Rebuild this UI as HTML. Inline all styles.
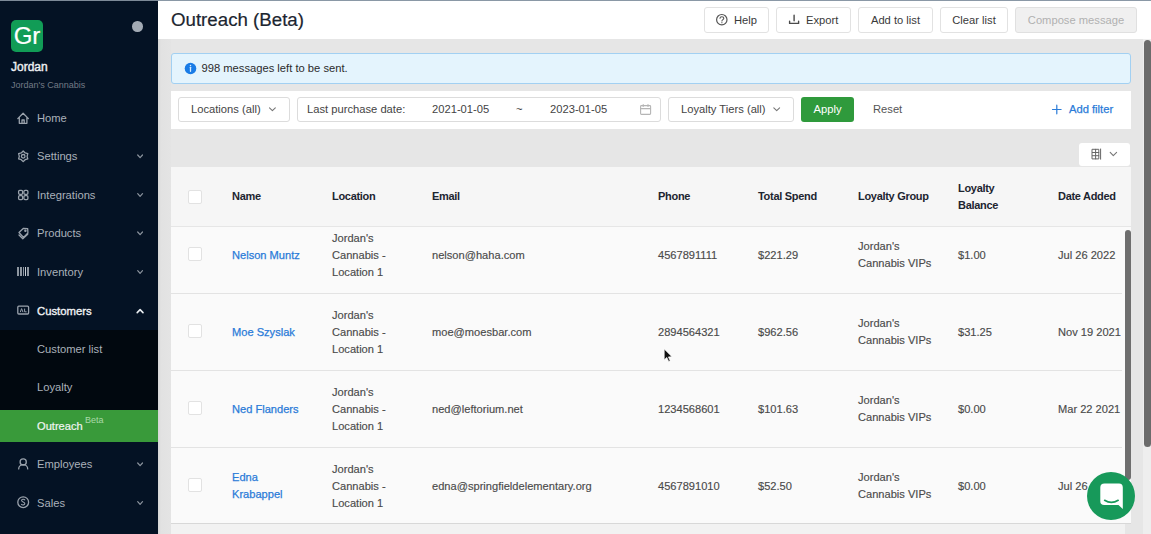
<!DOCTYPE html>
<html><head><meta charset="utf-8">
<style>
*{box-sizing:border-box;margin:0;padding:0}
html,body{width:1151px;height:534px;overflow:hidden;background:#e6e6e6;font-family:"Liberation Sans",sans-serif;color:#333;position:relative}
.abs{position:absolute}
#side{position:absolute;left:0;top:0;width:158px;height:534px;background:#041224}
#logo{left:11px;top:20px;width:32px;height:32px;background:#119c56;border-radius:5px;color:#fff;font-size:24px;line-height:32px;-webkit-text-stroke:0.2px #fff;text-align:center}
.dot{left:132px;top:21px;width:10.5px;height:10.5px;border-radius:50%;background:#a3abb5}
.uname{left:11px;top:59.5px;color:#eef0f3;font-size:12px;-webkit-text-stroke:0.4px #eef0f3}
.ustore{left:11px;top:80px;color:#727a86;font-size:9px}
.mi{position:absolute;left:0;width:158px;height:38px;color:#aab1ba;font-size:11.2px}
.mi .t{position:absolute;left:37px;top:-0.3px;line-height:38px;white-space:nowrap}
.mi svg.ic{position:absolute;left:17px;top:13px}
.mi svg.chev{position:absolute;left:136px;top:16px}
#header{left:158px;top:0;width:993px;height:39px;background:#fff;border-top:1px solid #8a98a6}
.title{left:171px;top:9px;font-size:18.7px;color:#1c2530;-webkit-text-stroke:0.2px #1c2530}
.btn{position:absolute;top:7px;height:26px;border:1px solid #e2e2e2;border-radius:3px;background:#fff;font-size:11.2px;color:#3a3a3a;line-height:24px;text-align:center;white-space:nowrap}
.btn svg{position:absolute}
#alert{left:171px;top:53px;width:960px;height:31px;background:#e4f4fd;border:1px solid #a2d0f2;border-radius:3px}
#alert .tx{position:absolute;left:29.5px;top:0;line-height:29px;font-size:11.2px;color:#2b2b2b}
#filter{left:171px;top:91px;width:960px;height:38px;background:#fff}
.sel{position:absolute;top:6px;height:25px;border:1px solid #dcdcdc;border-radius:3px;background:#fff;font-size:11.2px;color:#444;line-height:23px;white-space:nowrap}
.sel span{position:absolute;top:0}
#table{left:171px;top:167px;width:960px;height:357px;background:#fafafa;overflow:hidden}
#thead{position:absolute;left:0;top:0;width:960px;height:60px;background:#f6f6f6;border-bottom:1px solid #e6e6e6}
.th{position:absolute;font-size:11px;font-weight:bold;letter-spacing:-0.3px;color:#1d2530;white-space:nowrap;line-height:17px}
.td{position:absolute;font-size:11.1px;color:#4a4a4a;-webkit-text-stroke:0.15px #4a4a4a;white-space:nowrap;line-height:17px}
.nm{color:#2a7bd8;-webkit-text-stroke:0.25px #2a7bd8}
.cb{position:absolute;left:17px;width:14px;height:14px;border:1px solid #e2e2e2;border-radius:2px;background:#fff}
.sep{position:absolute;left:0;width:951px;height:1px;background:#e3e3e3}
</style></head><body>
<div id="side">
  <div class="abs" style="left:0;top:0;width:158px;height:1px;background:#7d8a98"></div>
  <div class="abs" id="logo">Gr</div>
  <div class="abs dot"></div>
  <div class="abs uname">Jordan</div>
  <div class="abs ustore">Jordan's Cannabis</div>
  <svg class="abs" style="left:0;top:0" width="158" height="534" viewBox="0 0 158 534" fill="none" stroke="#9aa2ac" stroke-width="1.3" stroke-linecap="round" stroke-linejoin="round">
    <!-- home -->
    <path d="M17.8 118.6 L23.1 113.2 L28.4 118.6 M19.3 117.3 V123.3 H26.9 V117.3 M22 123.3 V120 H24.2 V123.3"/>
    <!-- gear -->
    <path d="M23.20 151.00 L25.15 152.92 L27.79 153.65 L27.10 156.30 L27.79 158.95 L25.15 159.68 L23.20 161.60 L21.25 159.68 L18.61 158.95 L19.30 156.30 L18.61 153.65 L21.25 152.92 Z"/>
    <circle cx="23.2" cy="156.3" r="1.8"/>
    <!-- integrations -->
    <rect x="18.6" y="190.3" width="4" height="4" rx="1.1"/><rect x="23.9" y="190.3" width="4" height="4" rx="1.1"/>
    <rect x="18.6" y="195.6" width="4" height="4" rx="1.1"/><rect x="23.9" y="195.6" width="4" height="4" rx="1.1"/>
    <!-- tag -->
    <path d="M19 232.5 L23.5 228.3 L27.7 228.6 L27.9 233 L23.5 237.4 Z M19 235 L22.8 238.8 L27.7 234.3"/>
    <circle cx="25.4" cy="230.8" r="0.6" fill="#aab2bc"/>
    <!-- customers id card -->
    <rect x="17.8" y="306.2" width="10.8" height="7.8" rx="1"/>
    <path d="M20.4 311.8 L21.6 308.6 L22.8 311.8 M24.6 309 V311.8 H26.2" stroke-width="1"/>
    <!-- employees -->
    <circle cx="23.2" cy="461.9" r="3.1"/>
    <path d="M18.7 468.9 A4.5 4.3 0 0 1 27.7 468.9"/>
    <!-- sales -->
    <circle cx="23.2" cy="502.2" r="5.4"/>
    <path d="M24.8 499.8 C24 499 21.6 499 21.6 500.6 C21.6 502.2 24.8 501.8 24.8 503.6 C24.8 505.2 22.4 505.2 21.5 504.4" stroke-width="1.1"/>
    <!-- chevrons -->
    <path stroke="#8c949e" stroke-width="1.2" d="M137.7 155.0 L140.1 157.7 L142.5 155.0 M137.7 193.7 L140.1 196.4 L142.5 193.7 M137.7 232.0 L140.1 234.7 L142.5 232.0 M137.7 270.6 L140.1 273.3 L142.5 270.6 M137.7 463.0 L140.1 465.7 L142.5 463.0 M137.7 501.7 L140.1 504.4 L142.5 501.7"/>
    <path d="M137.2 312.6 L140.1 309.6 L143 312.6" stroke="#e8ecf0" stroke-width="1.6"/>
  </svg>
  <!-- barcode -->
  <div class="abs" style="left:17px;top:267px;width:12px;height:9px;background:linear-gradient(90deg,#8e96a0 0 1.5px,transparent 1.5px 2.5px,#8e96a0 2.5px 5px,transparent 5px 6px,#8e96a0 6px 7px,transparent 7px 7.7px,#c8ced4 7.7px 9.3px,transparent 9.3px 10px,#8e96a0 10px 10.8px,transparent 10.8px 11.2px,#8e96a0 11.2px 12px)"></div>

  <div class="mi" style="top:99px"><span class="t">Home</span></div>
  <div class="mi" style="top:137px"><span class="t">Settings</span></div>
  <div class="mi" style="top:176px"><span class="t">Integrations</span></div>
  <div class="mi" style="top:214px"><span class="t">Products</span></div>
  <div class="mi" style="top:253px"><span class="t">Inventory</span></div>
  <div class="mi" style="top:292px;color:#f0f2f4;font-size:11.3px;-webkit-text-stroke:0.35px #f0f2f4"><span class="t">Customers</span></div>
  <div class="abs" style="left:0;top:330px;width:158px;height:80px;background:#01080f"></div>
  <div class="mi" style="top:330px"><span class="t">Customer list</span></div>
  <div class="mi" style="top:368px"><span class="t">Loyalty</span></div>
  <div class="abs" style="left:0;top:410px;width:158px;height:32px;background:#399a3a"></div>
  <div class="mi" style="top:407px;color:#f2f5f2;font-size:11.1px;-webkit-text-stroke:0.2px #f2f5f2"><span class="t">Outreach</span></div>
  <div class="abs" style="left:85px;top:415px;font-size:9px;color:#a9d9a9">Beta</div>
  <div class="mi" style="top:445px"><span class="t">Employees</span></div>
  <div class="mi" style="top:484px"><span class="t">Sales</span></div>
</div>
<div class="abs" style="left:158px;top:39px;width:13px;height:495px;background:linear-gradient(90deg,#d6d6d6,#e2e2e2 3px,#e4e4e4)"></div>
<div class="abs" id="header"></div>
<div class="abs title">Outreach (Beta)</div>
<div class="btn" style="left:704px;width:65px;text-align:left;padding-left:29px">Help</div>
<div class="btn" style="left:776px;width:75px;text-align:left;padding-left:29px">Export</div>
<div class="btn" style="left:858px;width:75px">Add to list</div>
<div class="btn" style="left:940px;width:68px">Clear list</div>
<div class="btn" style="left:1015px;width:122px;background:#f0f0f0;color:#b0b0b0;border-color:#e0e0e0">Compose message</div>

<div class="abs" id="alert"><span class="tx">998 messages left to be sent.</span></div>

<div class="abs" id="filter">
  <div class="sel" style="left:7px;width:112px"><span style="left:12px">Locations (all)</span></div>
  <div class="sel" style="left:126px;width:364px"><span style="left:9px">Last purchase date:</span><span style="left:134px">2021-01-05</span><span style="left:218px">~</span><span style="left:252px">2023-01-05</span></div>
  <div class="sel" style="left:497px;width:126px"><span style="left:12px">Loyalty Tiers (all)</span></div>
  <div class="abs" style="left:630px;top:6px;width:53px;height:25px;background:#2f9a3c;border-radius:3px;color:#fff;font-size:11.2px;line-height:25px;text-align:center">Apply</div>
  <div class="abs" style="left:702px;top:6px;line-height:25px;font-size:11.2px;color:#555">Reset</div>
  <div class="abs" style="left:898px;top:6px;line-height:25px;font-size:11.2px;color:#2a7bd8;-webkit-text-stroke:0.25px #2a7bd8">Add filter</div>
</div>

<div class="abs" style="left:1079px;top:143px;width:51px;height:23px;background:#fff;border-radius:3px"></div>

<div class="abs" id="table">
  <div id="thead">
    <div class="cb" style="top:23px"></div>
    <div class="th" style="left:61px;top:21px">Name</div>
    <div class="th" style="left:161px;top:21px">Location</div>
    <div class="th" style="left:261px;top:21px">Email</div>
    <div class="th" style="left:487px;top:21px">Phone</div>
    <div class="th" style="left:587px;top:21px">Total Spend</div>
    <div class="th" style="left:687px;top:21px">Loyalty Group</div>
    <div class="th" style="left:787px;top:13px">Loyalty<br>Balance</div>
    <div class="th" style="left:887px;top:21px">Date Added</div>
  </div>
  <div class="cb" style="top:80px"></div>
  <div class="td nm" style="left:61px;top:79.5px">Nelson Muntz</div>
  <div class="td" style="left:161px;top:62.5px">Jordan's<br>Cannabis -<br>Location 1</div>
  <div class="td" style="left:261px;top:79.5px">nelson@haha.com</div>
  <div class="td" style="left:487px;top:79.5px">4567891111</div>
  <div class="td" style="left:587px;top:79.5px">$221.29</div>
  <div class="td" style="left:687px;top:71px">Jordan's<br>Cannabis VIPs</div>
  <div class="td" style="left:787px;top:79.5px">$1.00</div>
  <div class="td" style="left:887px;top:79.5px">Jul 26 2022</div>
  <div class="sep" style="top:125.5px"></div>
  <div class="cb" style="top:157px"></div>
  <div class="td nm" style="left:61px;top:156.5px">Moe Szyslak</div>
  <div class="td" style="left:161px;top:139.5px">Jordan's<br>Cannabis -<br>Location 1</div>
  <div class="td" style="left:261px;top:156.5px">moe@moesbar.com</div>
  <div class="td" style="left:487px;top:156.5px">2894564321</div>
  <div class="td" style="left:587px;top:156.5px">$962.56</div>
  <div class="td" style="left:687px;top:148px">Jordan's<br>Cannabis VIPs</div>
  <div class="td" style="left:787px;top:156.5px">$31.25</div>
  <div class="td" style="left:887px;top:156.5px">Nov 19 2021</div>
  <div class="sep" style="top:202.5px"></div>
  <div class="cb" style="top:234px"></div>
  <div class="td nm" style="left:61px;top:233.5px">Ned Flanders</div>
  <div class="td" style="left:161px;top:216.5px">Jordan's<br>Cannabis -<br>Location 1</div>
  <div class="td" style="left:261px;top:233.5px">ned@leftorium.net</div>
  <div class="td" style="left:487px;top:233.5px">1234568601</div>
  <div class="td" style="left:587px;top:233.5px">$101.63</div>
  <div class="td" style="left:687px;top:225px">Jordan's<br>Cannabis VIPs</div>
  <div class="td" style="left:787px;top:233.5px">$0.00</div>
  <div class="td" style="left:887px;top:233.5px">Mar 22 2021</div>
  <div class="sep" style="top:279.5px"></div>
  <div class="cb" style="top:311px"></div>
  <div class="td nm" style="left:61px;top:302px">Edna<br>Krabappel</div>
  <div class="td" style="left:161px;top:293.5px">Jordan's<br>Cannabis -<br>Location 1</div>
  <div class="td" style="left:261px;top:310.5px">edna@springfieldelementary.org</div>
  <div class="td" style="left:487px;top:310.5px">4567891010</div>
  <div class="td" style="left:587px;top:310.5px">$52.50</div>
  <div class="td" style="left:687px;top:302px">Jordan's<br>Cannabis VIPs</div>
  <div class="td" style="left:787px;top:310.5px">$0.00</div>
  <div class="td" style="left:887px;top:310.5px">Jul 26 2022</div>
  <div class="sep" style="top:356px;background:#d8d8d8;width:960px"></div>
</div>

<svg class="abs" style="left:0;top:0" width="1151" height="534" viewBox="0 0 1151 534" fill="none" stroke-linecap="round" stroke-linejoin="round">
  <!-- help -->
  <circle cx="721.8" cy="19.7" r="5.2" stroke="#555" stroke-width="1.2"/>
  <path d="M720 18.3 C720 16.2 723.8 16.2 723.8 18.3 C723.8 19.6 721.9 19.7 721.9 21" stroke="#555" stroke-width="1.1"/>
  <circle cx="721.9" cy="22.7" r="0.6" fill="#555"/>
  <!-- export -->
  <path d="M794.1 15.2 V20.8 M789.6 21.2 V23.4 H798.6 V21.2" stroke="#4a4a4a" stroke-width="1.4"/>
  <!-- info -->
  <circle cx="190.5" cy="68.5" r="5.8" fill="#1a7ce6"/>
  <path d="M190.5 67.3 V71.3" stroke="#d8ecff" stroke-width="1.3"/>
  <circle cx="190.5" cy="65.5" r="0.75" fill="#d8ecff"/>
  <!-- filter chevrons -->
  <path d="M269.5 107.8 L272.4 110.7 L275.3 107.8 M773.8 107.8 L776.7 110.7 L779.6 107.8" stroke="#777" stroke-width="1.1"/>
  <!-- calendar -->
  <rect x="640.6" y="105.6" width="10" height="8.8" rx="0.8" stroke="#b5b5b5" stroke-width="1.1"/>
  <path d="M640.8 108.6 H650.4 M643.2 104.6 V106.4 M648 104.6 V106.4" stroke="#b5b5b5" stroke-width="1.1"/>
  <!-- plus -->
  <path d="M1056.8 105.2 V113.8 M1052.5 109.5 H1061.1" stroke="#2a7bd8" stroke-width="1.2"/>
  <!-- grid icon -->
  <rect x="1092.4" y="149.3" width="6.4" height="9.6" stroke="#666" stroke-width="1"/>
  <path d="M1092.4 152.5 H1098.8 M1092.4 155.7 H1098.8 M1095.6 149.3 V158.9 M1100.6 149 V159.2" stroke="#666" stroke-width="1"/>
  <path d="M1110.2 152.4 L1113.3 155.7 L1116.6 152.4" stroke="#777" stroke-width="1.1"/>
</svg>
<div class="abs" style="left:171px;top:524px;width:954px;height:10px;background:#f2f2f2"></div>
<!-- outer scrollbar -->
<div class="abs" style="left:1143px;top:39px;width:8px;height:495px;background:#eeeeee"></div>
<div class="abs" style="left:1144px;top:40px;width:6.5px;height:407px;background:#6b6b6b;border-radius:3.5px"></div>
<!-- inner scrollbar -->
<div class="abs" style="left:1125px;top:230px;width:6px;height:250px;background:#6e6e6e;border-radius:3px"></div>
<!-- chat button -->
<div class="abs" style="left:1086.5px;top:472px;width:48px;height:48px;border-radius:50%;background:#17995a"></div>
<svg class="abs" style="left:1095.5px;top:479px" width="32" height="34" viewBox="0 0 32 34">
  <path d="M8.5 4.6 H23 Q26.8 4.6 26.8 8.4 V30 L22.5 26 H8.2 Q4.3 26 4.3 22.2 V8.4 Q4.3 4.6 8.5 4.6 Z" fill="#fff"/>
  <path d="M8.6 21.3 Q15.4 25.4 22.2 21.3" stroke="#17995a" stroke-width="1.6" fill="none" stroke-linecap="round"/>
</svg>
<!-- cursor -->
<svg class="abs" style="left:663px;top:348px" width="11" height="15" viewBox="0 0 10 14">
  <path d="M1 1 L1 11 L3.4 8.8 L5.2 12.6 L6.6 12 L4.9 8.3 L8.2 8.1 Z" fill="#111" stroke="#fff" stroke-width="0.6"/>
</svg>

</body></html>
